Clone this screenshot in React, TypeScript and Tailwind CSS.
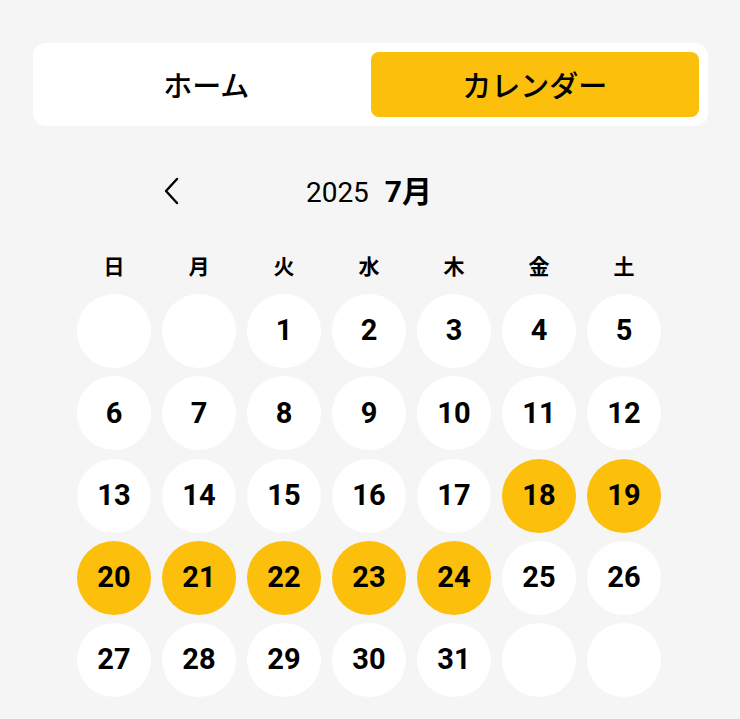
import React from "react";

const Y = "bg-[#fbbf0c]";

export default function App() {
  const days: (number | null)[] = [null, null];
  for (let i = 1; i <= 31; i++) days.push(i);
  while (days.length < 35) days.push(null);
  const hl = new Set([18, 19, 20, 21, 22, 23, 24]);
  const wk = ["日", "月", "火", "水", "木", "金", "土"];
  return (
    <div className="min-h-[719px] w-[740px] bg-[#f5f5f5] font-['Roboto','Noto_Sans_CJK_JP',sans-serif] text-black overflow-hidden">
      <div className="pt-[43px] pl-[33px] pr-[32px]">
        <div className="bg-white rounded-[13px] p-[9px] flex h-[83px]">
          <div className="flex-1 flex items-center justify-center text-[29px] font-medium font-['Noto_Sans_CJK_JP',sans-serif]">
            ホーム
          </div>
          <div className={`flex-1 flex items-center justify-center rounded-[8px] ${Y} text-[29px] font-medium font-['Noto_Sans_CJK_JP',sans-serif]`}>
            カレンダー
          </div>
        </div>
      </div>

      <div className="mt-[37px] ml-[151px] w-[436px] h-[56px] flex items-center justify-between">
        <div className="w-[40px] h-[40px] flex items-center justify-center">
          <svg width="18" height="28" viewBox="0 0 18 28" fill="none">
            <path d="M15 2 L4 14 L15 26" stroke="#000" strokeWidth="2.4" strokeLinecap="round" strokeLinejoin="round" />
          </svg>
        </div>
        <div className="flex items-baseline gap-[16px]">
          <span className="text-[28px] font-normal">2025</span>
          <span className="text-[30px] font-bold">7月</span>
        </div>
        <div className="w-[40px] h-[40px] invisible" />
      </div>

      <div className="mt-[32px] ml-[77px] w-[584px] grid grid-cols-7 gap-x-[11px]">
        {wk.map((w) => (
          <div key={w} className="h-[30px] flex items-center justify-center text-[21px] font-semibold font-['Noto_Sans_CJK_JP',sans-serif]">
            {w}
          </div>
        ))}
      </div>

      <div className="mt-[13px] ml-[77px] w-[584px] grid grid-cols-7 gap-x-[11px] gap-y-[8.25px]">
        {days.map((d, i) => (
          <div
            key={i}
            className={`w-[74px] h-[74px] rounded-full flex items-center justify-center text-[29px] font-bold ${d && hl.has(d) ? Y : "bg-white"}`}
          >
            {d ?? ""}
          </div>
        ))}
      </div>
    </div>
  );
}
